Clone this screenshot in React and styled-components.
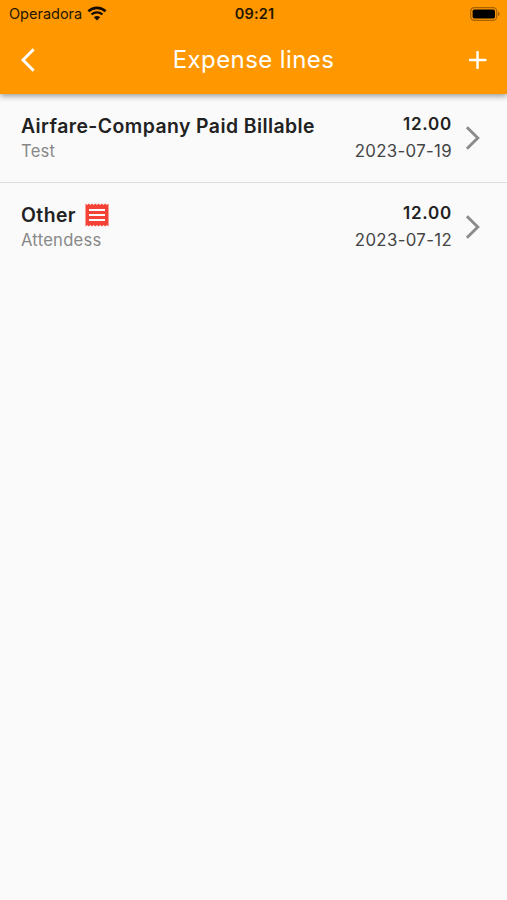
import React from "react";
import styled, { createGlobalStyle } from "styled-components";

const EXPENSE_LINES = [
  {
    id: "1",
    category: "Airfare-Company Paid Billable",
    description: "Test",
    amount: "12.00",
    date: "2023-07-19",
    hasReceipt: false,
  },
  {
    id: "2",
    category: "Other",
    description: "Attendess",
    amount: "12.00",
    date: "2023-07-12",
    hasReceipt: true,
  },
];

const WifiIcon = () => (
  <svg width="20" height="16" viewBox="0 0 20 16" fill="none">
    <path d="M1.4 5.3C6.2 0.7 13.8 0.7 18.6 5.3" stroke="#150d00" strokeWidth="2.6" />
    <path d="M4.5 8.5C7.6 5.6 12.4 5.6 15.5 8.5" stroke="#150d00" strokeWidth="2.3" />
    <path d="M10 14.4L6.8 11.2C8.6 9.5 11.4 9.5 13.2 11.2Z" fill="#150d00" />
  </svg>
);

const BatteryIcon = () => (
  <svg width="30" height="14" viewBox="0 0 30 14" fill="none">
    <rect x="0.7" y="0.7" width="26" height="12.6" rx="3.6" stroke="#a66300" strokeWidth="1.2" />
    <rect x="2.6" y="2.5" width="22.4" height="9" rx="1.8" fill="#000" />
    <path d="M28 4.8C30.2 5.5 30.2 8.5 28 9.2Z" fill="#a66300" />
  </svg>
);

const BackIcon = () => (
  <svg width="14" height="24" viewBox="0 0 14 24" fill="none">
    <path d="M12.7 1.2L2 12L12.7 22.8" stroke="#fff" strokeWidth="2.9" />
  </svg>
);

const AddIcon = () => (
  <svg width="18" height="18" viewBox="0 0 18 18" fill="none">
    <path d="M8.5 1V17M0.5 9H16.5" stroke="#fff" strokeWidth="2.4" strokeLinecap="round" />
  </svg>
);

const ChevronIcon = () => (
  <svg width="15" height="24" viewBox="0 0 15 24" fill="none">
    <path d="M1.9 1.2L12.8 12L1.9 22.8" stroke="#8b8b8b" strokeWidth="2.9" />
  </svg>
);

const ReceiptIcon = () => (
  <svg width="24" height="24" viewBox="0 0 24 24">
    <path
      d="M0.5 0.5l1.65 1.5 1.64-1.5 1.64 1.5 1.64-1.5 1.64 1.5 1.65-1.5 1.64 1.5 1.64-1.5 1.64 1.5 1.65-1.5 1.64 1.5 1.64-1.5 1.64 1.5 1.65-1.5v23l-1.65-1.5-1.64 1.5-1.64-1.5-1.64 1.5-1.65-1.5-1.64 1.5-1.64-1.5-1.64 1.5-1.65-1.5-1.64 1.5-1.64-1.5-1.64 1.5-1.64-1.5-1.65 1.5z"
      fill="#f44336"
    />
    <path d="M4 7H20M4 12H20M4 17H20" stroke="#fafafa" strokeWidth="2.1" />
  </svg>
);

export default function App() {
  return (
    <>
      <GlobalStyle />
      <Screen>
        <Header>
          <StatusBar>
            <Carrier>
              <span>Operadora</span>
              <WifiIcon />
            </Carrier>
            <Clock>09:21</Clock>
            <Battery>
              <BatteryIcon />
            </Battery>
          </StatusBar>
          <NavBar>
            <NavButton aria-label="Back">
              <BackIcon />
            </NavButton>
            <Title>Expense lines</Title>
            <NavButton aria-label="Add" $end>
              <AddIcon />
            </NavButton>
          </NavBar>
        </Header>
        <LineList>
          {EXPENSE_LINES.map((line) => (
            <LineRow key={line.id}>
              <LineInfo>
                <Category>
                  <span>{line.category}</span>
                  {line.hasReceipt && <ReceiptIcon />}
                </Category>
                <Description>{line.description}</Description>
              </LineInfo>
              <LineTotals>
                <Amount>{line.amount}</Amount>
                <LineDate>{line.date}</LineDate>
              </LineTotals>
              <ChevronIcon />
            </LineRow>
          ))}
        </LineList>
      </Screen>
    </>
  );
}

const GlobalStyle = createGlobalStyle`
  * {
    box-sizing: border-box;
  }

  body {
    margin: 0;
    background-color: #fafafa;
    font-family: Inter, "Liberation Sans", sans-serif;
  }

  svg {
    display: block;
    flex-shrink: 0;
  }
`;

const Screen = styled.div`
  min-height: 100vh;
  background-color: #fafafa;
`;

const Header = styled.header`
  height: 94px;
  background-color: #ff9800;
  box-shadow: 0 2px 6px rgba(0, 0, 0, 0.4);
`;

const StatusBar = styled.div`
  display: grid;
  grid-template-columns: 1fr auto 1fr;
  align-items: center;
  height: 27px;
  padding: 0 7px 0 9px;
  color: #241600;
  font-size: 14.5px;
`;

const Carrier = styled.div`
  display: flex;
  align-items: center;
  gap: 5px;
`;

const Clock = styled.div`
  font-weight: 600;
  letter-spacing: 0.2px;
`;

const Battery = styled.div`
  display: flex;
  justify-content: flex-end;
`;

const NavBar = styled.nav`
  display: grid;
  grid-template-columns: 1fr auto 1fr;
  align-items: center;
  height: 66px;
  padding: 0 20.5px;
`;

const NavButton = styled.button`
  display: flex;
  justify-content: ${(props) => (props.$end ? "flex-end" : "flex-start")};
  padding: 0;
  border: 0;
  background: none;
`;

const Title = styled.h1`
  margin: 0;
  color: #fff;
  font-size: 24px;
  font-weight: 400;
  line-height: 30px;
  letter-spacing: 0.4px;
`;

const LineList = styled.ul`
  margin: 0;
  padding: 0;
  list-style: none;
`;

const LineRow = styled.li`
  display: flex;
  align-items: center;
  height: 88px;
  padding: 0 27px 0 21px;

  &:not(:last-child) {
    height: 89px;
    border-bottom: 1px solid #dcdcdc;
  }
`;

const LineInfo = styled.div`
  flex: 1;
`;

const Category = styled.div`
  display: flex;
  align-items: center;
  gap: 9px;
  height: 26px;
  padding-top: 1px;
  color: #212121;
  font-size: 19.4px;
  font-weight: 600;
  letter-spacing: 0.43px;
`;

const Description = styled.div`
  height: 26px;
  color: #888;
  font-size: 16.6px;
  line-height: 26px;
  letter-spacing: 0.25px;
`;

const LineTotals = styled.div`
  margin-right: 13px;
  text-align: right;
`;

const Amount = styled.div`
  color: #212121;
  font-size: 17px;
  font-weight: 600;
  line-height: 24px;
  letter-spacing: 0.75px;
`;

const LineDate = styled.div`
  padding-top: 2px;
  color: #444;
  font-size: 16.8px;
  line-height: 26px;
  letter-spacing: 0.35px;
`;
